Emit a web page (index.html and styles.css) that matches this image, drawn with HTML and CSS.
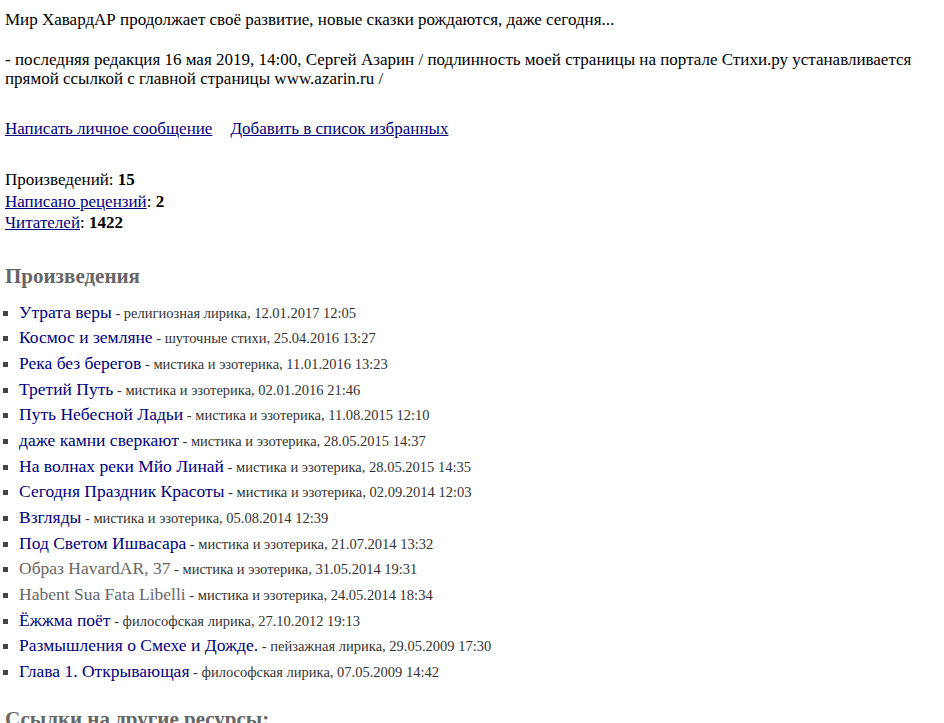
FILE: index.html
```html
<!DOCTYPE html>
<html lang="ru">
<head>
<meta charset="utf-8">
<title>Сергей Азарин</title>
<link rel="stylesheet" href="styles.css">
</head>
<body>
<div class="page">
  <p class="about">Мир ХавардАР продолжает своё развитие, новые сказки рождаются, даже сегодня...</p>
  <p class="about">- последняя редакция 16 мая 2019, 14:00, Сергей Азарин / подлинность моей страницы на портале Стихи.ру устанавливается прямой ссылкой с главной страницы www.azarin.ru /</p>
  <p class="actions"><a href="#">Написать личное сообщение</a><span class="sep"></span><a href="#">Добавить в список избранных</a></p>
  <div class="stats">
    <div class="stat">Произведений: <b>15</b></div>
    <div class="stat"><a href="#">Написано рецензий</a>: <b>2</b></div>
    <div class="stat"><a href="#">Читателей</a>: <b>1422</b></div>
  </div>
  <h2 class="section">Произведения</h2>
  <ul class="poems">
    <li><a class="poemlink" href="#">Утрата веры</a><small> - религиозная лирика, 12.01.2017 12:05</small></li>
    <li><a class="poemlink" href="#">Космос и земляне</a><small> - шуточные стихи, 25.04.2016 13:27</small></li>
    <li><a class="poemlink" href="#">Река без берегов</a><small> - мистика и эзотерика, 11.01.2016 13:23</small></li>
    <li><a class="poemlink" href="#">Третий Путь</a><small> - мистика и эзотерика, 02.01.2016 21:46</small></li>
    <li><a class="poemlink" href="#">Путь Небесной Ладьи</a><small> - мистика и эзотерика, 11.08.2015 12:10</small></li>
    <li><a class="poemlink" href="#">даже камни сверкают</a><small> - мистика и эзотерика, 28.05.2015 14:37</small></li>
    <li><a class="poemlink" href="#">На волнах реки Мйо Линай</a><small> - мистика и эзотерика, 28.05.2015 14:35</small></li>
    <li><a class="poemlink" href="#">Сегодня Праздник Красоты</a><small> - мистика и эзотерика, 02.09.2014 12:03</small></li>
    <li><a class="poemlink" href="#">Взгляды</a><small> - мистика и эзотерика, 05.08.2014 12:39</small></li>
    <li><a class="poemlink" href="#">Под Светом Ишвасара</a><small> - мистика и эзотерика, 21.07.2014 13:32</small></li>
    <li><a class="poemlink visited" href="#">Образ HavardAR, 37</a><small> - мистика и эзотерика, 31.05.2014 19:31</small></li>
    <li><a class="poemlink visited" href="#">Habent Sua Fata Libelli</a><small> - мистика и эзотерика, 24.05.2014 18:34</small></li>
    <li><a class="poemlink" href="#">Ёжжма поёт</a><small> - философская лирика, 27.10.2012 19:13</small></li>
    <li><a class="poemlink" href="#">Размышления о Смехе и Дожде.</a><small> - пейзажная лирика, 29.05.2009 17:30</small></li>
    <li><a class="poemlink" href="#">Глава 1. Открывающая</a><small> - философская лирика, 07.05.2009 14:42</small></li>
  </ul>
  <h2 class="section section-links">Ссылки на другие ресурсы:</h2>
</div>
</body>
</html>
```
FILE: styles.css
```css
html, body {
  margin: 0;
  padding: 0;
  background: #ffffff;
}
body {
  font-family: "Liberation Serif", "Times New Roman", serif;
  font-size: 17px;
  color: #000000;
}
.page {
  padding: 10px 5px 0 5px;
}
.about {
  margin: 0 0 21px 0;
  line-height: 19px;
}
.actions {
  margin: 31px 0 31px 0;
  line-height: 19px;
}
.sep {
  display: inline-block;
  width: 18px;
}
a {
  color: #000080;
  text-decoration: underline;
}
.stats {
  line-height: 21.5px;
}
.section {
  font-size: 21px;
  line-height: 24px;
  font-weight: bold;
  color: #666666;
  margin: 30px 0 12px 0;
}
.section-links {
  margin-top: 22px;
}
.poems {
  list-style: square;
  margin: 0;
  padding: 0 0 0 14px;
  font-size: 16px;
}
.poems li {
  line-height: 25.7px;
  height: 25.7px;
  color: #333333;
}
.poems li::marker {
  color: #444444;
}
.poemlink {
  font-size: 17.5px;
  line-height: 1;
  color: #000080;
  text-decoration: none;
}
.poemlink.visited {
  color: #666666;
}
.poems small {
  font-size: 14.5px;
  line-height: 1;
  color: #333333;
}
```
